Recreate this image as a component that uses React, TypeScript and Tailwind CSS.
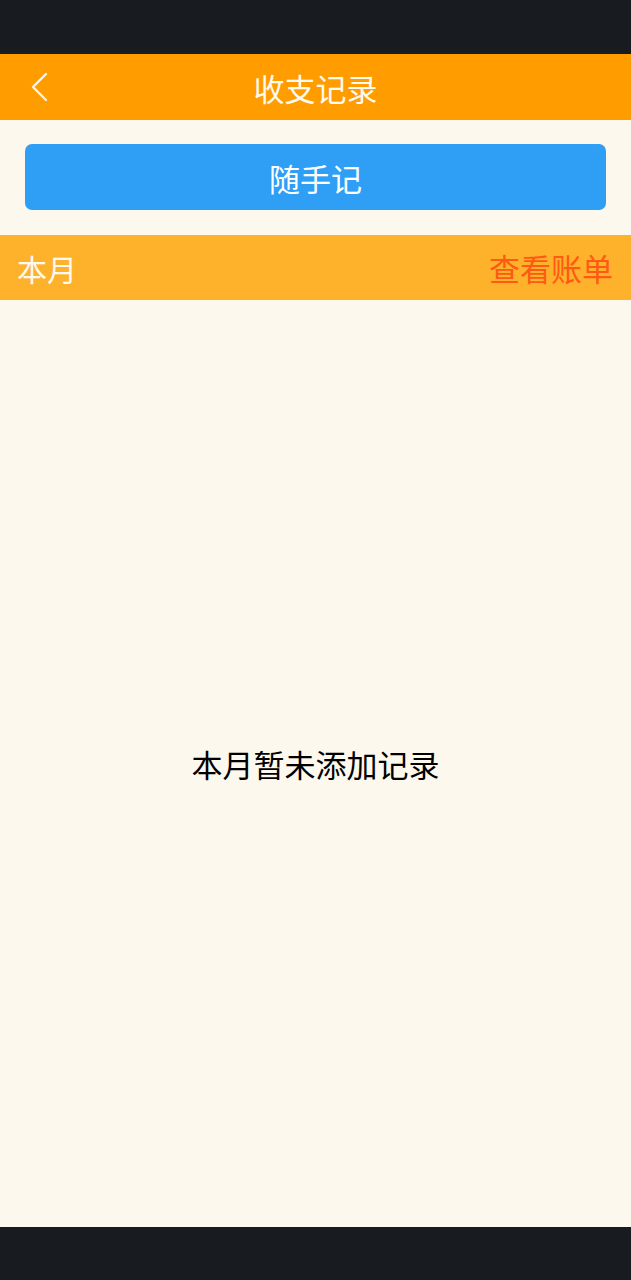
export default function App() {
  return (
    <div
      className="flex h-[1280px] w-full flex-col bg-[#fdf8ee]"
      style={{ fontFamily: '"Noto Sans CJK SC", "Noto Sans", sans-serif' }}
    >
      <div className="h-[54px] shrink-0 bg-[#181c20]" />
      <header className="relative flex h-[66px] shrink-0 items-center justify-center bg-[#ff9c00]">
        <button type="button" className="absolute left-[28px] top-[17px] text-white">
          <svg width="24" height="32" viewBox="0 0 24 32" fill="none">
            <path d="M18 3 L5 16 L18 29" stroke="#fff7e6" strokeWidth="2.4" strokeLinecap="round" strokeLinejoin="round" />
          </svg>
        </button>
        <h1 className="text-[31px] leading-none text-[#fffaf0]">收支记录</h1>
      </header>
      <div className="shrink-0 px-[25px] pb-[25px] pt-[24px]">
        <button
          type="button"
          className="flex h-[66px] w-full items-center justify-center rounded-[7px] bg-[#2f9ff5] text-[31px] leading-none text-white"
        >
          随手记
        </button>
      </div>
      <div className="flex h-[65px] shrink-0 items-center justify-between bg-[#feb22c] pl-[17px] pr-[18px]">
        <span className="text-[30px] leading-none text-[#fffaf0]">本月</span>
        <span className="text-[31px] leading-none text-[#ff5a14]">查看账单</span>
      </div>
      <main className="flex flex-1 items-center justify-center">
        <p className="text-[31px] leading-none text-black">本月暂未添加记录</p>
      </main>
      <div className="h-[53px] shrink-0 bg-[#181c20]" />
    </div>
  );
}
